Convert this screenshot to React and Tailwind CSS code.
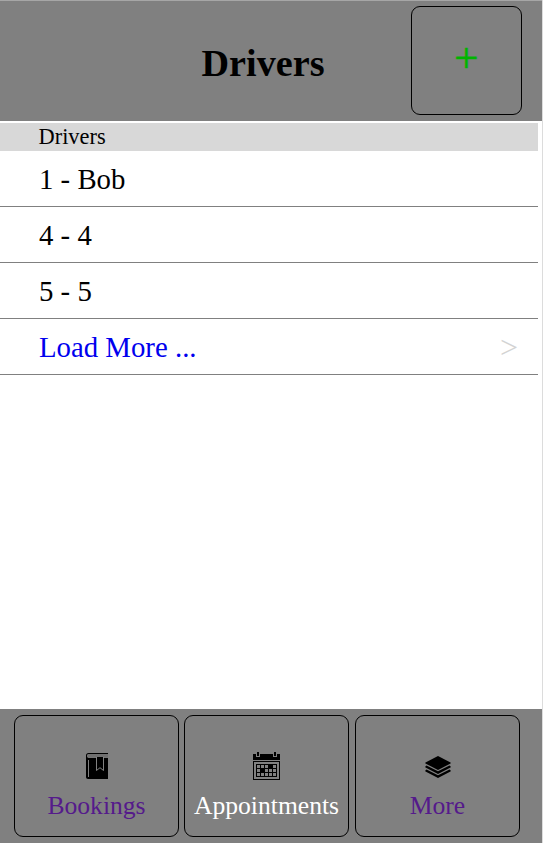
import React from "react";

function BookIcon() {
  return (
    <svg width="22" height="26" viewBox="0 0 22 26" className="block">
      <path d="M2.5 0H22V1H3C1.5 1 1 2 1 2.7C1 4 2 5 3 5H22V26H2C.8 26 0 25.2 0 24V2.5C0 1 1 0 2.5 0Z" fill="#000" />
      <path d="M3 1H22V4.8H3C.8 4.8 .8 1 3 1Z" fill="#707070" />
      <path d="M2.5 7V24" stroke="#808080" fill="none" />
      <path d="M10.5 4V17.5L14 14.7L17.5 17.5V4" stroke="#909090" strokeWidth=".9" fill="#000" />
    </svg>
  );
}

function CalendarIcon() {
  const lines = [3, 7, 11, 15, 19, 23];
  return (
    <svg width="27" height="28" viewBox="0 0 27 28" shapeRendering="crispEdges" className="block">
      <path d="M0 2H27V8H0Z" fill="#000" />
      <path d="M3 0H7V5H3ZM20 0H24V5H20Z" fill="#808080" />
      <path d="M4 0H6V4H4ZM21 0H23V4H21Z" fill="#000" />
      <path d="M.5 9.5H26.5V27.5H.5Z" fill="none" stroke="#000" />
      {lines.map((x) => (
        <rect key={x} x={x} y="12" width="1" height="13" />
      ))}
      {[12, 16, 20, 24].map((y) => (
        <rect key={y} x="3" y={y} width="21" height="1" />
      ))}
      <path d="M16 13H19V16H16ZM8 17H11V20H8Z" fill="#000" />
    </svg>
  );
}

function LayersIcon() {
  return (
    <svg width="26" height="22" viewBox="0 0 26 22" className="mt-[2px] block">
      <path d="M13 0L25.5 6.4Q26 7 25.5 7.6L13 14L.5 7.6Q0 7 .5 6.4Z" />
      <path d="M1.5 9.6L13 15.3L24.5 9.6L25.5 10.2Q26 11 25.5 11.6L13 18L.5 11.6Q0 11 .5 10.2Z" />
      <path d="M1.5 13.6L13 19.3L24.5 13.6L25.5 14.2Q26 15 25.5 15.6L13 22L.5 15.6Q0 15 .5 14.2Z" />
    </svg>
  );
}

function Tab({ icon, label, color }) {
  return (
    <a className="flex h-[122px] w-[165px] flex-col items-center rounded-[9px] border border-black pt-[35px]">
      <span className="flex h-[30px] items-center justify-center">{icon}</span>
      <span className={`mt-[10px] text-[25.6px] leading-[30px] whitespace-nowrap ${color}`}>{label}</span>
    </a>
  );
}

export default function App() {
  return (
    <div className="flex h-[843px] w-[543px] flex-col overflow-hidden border-r border-[#dcdcdc] bg-white font-['Liberation_Serif','Times_New_Roman',serif] text-black">
      <header className="grid h-[121px] shrink-0 grid-cols-[131px_1fr_131px] border-t border-[#a6a6a6] bg-[#808080]">
        <span />
        <h1 className="-translate-x-[9px] pt-[40px] pl-[2px] text-center text-[38.2px] leading-[44px] font-bold">Drivers</h1>
        <button className="mt-[5px] flex h-[109px] w-[111px] justify-center rounded-[9px] border border-black pt-[26px] text-[43px] leading-[50px] text-[#00b400] [-webkit-text-stroke:0.6px_#00b400]">
          +
        </button>
      </header>
      <main className="mt-[2px] mr-[4px] flex-1">
        <h2 className="h-[28px] bg-[#d8d8d8] pl-[38.5px] text-[22.4px] leading-[27px]">Drivers</h2>
        <ul>
          {["1 - Bob", "4 - 4", "5 - 5"].map((name) => (
            <li key={name} className="h-[56px] border-b border-[#808080] pl-[39px] text-[28.8px] leading-[57px]">
              {name}
            </li>
          ))}
          <li className="flex h-[56px] justify-between border-b border-[#808080] pr-[20px] pl-[39px] text-[28.8px] leading-[57px] text-[#0000ee]">
            <span>Load More ...</span>
            <span className="text-[32px] text-[#d3d3d3]">&gt;</span>
          </li>
        </ul>
      </main>
      <footer className="flex h-[134px] shrink-0 bg-[#808080] pt-[6px] pl-[14px]">
        <Tab icon={<BookIcon />} label="Bookings" color="text-[#551a8b]" />
        <div className="ml-[5px]">
          <Tab icon={<CalendarIcon />} label="Appointments" color="text-white" />
        </div>
        <div className="ml-[6px]">
          <Tab icon={<LayersIcon />} label="More" color="text-[#551a8b]" />
        </div>
      </footer>
    </div>
  );
}
